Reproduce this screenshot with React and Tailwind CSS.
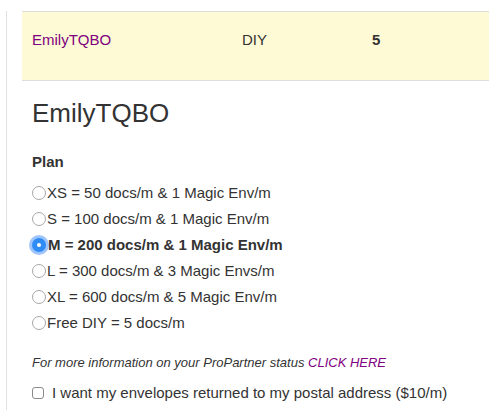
import React from "react";

function Radio({ checked }) {
  if (checked) {
    return (
      <span className="relative inline-flex w-[14px] h-[14px] mr-[2px] shrink-0 items-center justify-center rounded-full bg-[#2f8cf5] shadow-[0_0_0_3px_rgba(80,150,250,0.55)]">
        <span className="w-[4px] h-[4px] rounded-full bg-white" />
      </span>
    );
  }
  return (
    <span className="inline-block w-[14px] h-[14px] mr-[1px] shrink-0 rounded-full border border-[#a8a8a8] bg-white" />
  );
}

const plans = [
  { label: "XS = 50 docs/m & 1 Magic Env/m" },
  { label: "S = 100 docs/m & 1 Magic Env/m" },
  { label: "M = 200 docs/m & 1 Magic Env/m", checked: true },
  { label: "L = 300 docs/m & 3 Magic Envs/m" },
  { label: "XL = 600 docs/m & 5 Magic Env/m" },
  { label: "Free DIY = 5 docs/m" },
];

export default function App() {
  return (
    <div
      className="w-[489px] h-[410px] bg-white overflow-hidden text-[#333] text-[15px]"
      style={{ fontFamily: '"Liberation Sans", Arial, sans-serif' }}
    >
      <div className="ml-[6px] h-full border-l border-[#e0e0e0] pl-[15px]">
        <div className="mt-[11px] h-[70px] bg-[#fefad5] border-y border-[#dedede] flex pl-[10px] pt-[18px] leading-[20px]">
          <span className="w-[210px] text-[#800080]">EmilyTQBO</span>
          <span className="w-[130px]">DIY</span>
          <span className="font-bold">5</span>
        </div>
        <div className="pl-[10px]">
          <h1 className="mt-[17px] text-[26px] leading-[30px] text-[#333]">EmilyTQBO</h1>
          <div className="mt-[24px] font-bold leading-[20px]">Plan</div>
          <div className="mt-[8px] flex flex-col">
            {plans.map((p) => (
              <div key={p.label} className={"h-[26px] flex items-center " + (p.checked ? "font-bold" : "")}>
                <Radio checked={p.checked} />
                <span>{p.label}</span>
              </div>
            ))}
          </div>
          <div className="mt-[19px] italic text-[13px] leading-[16px]">
            For more information on your ProPartner status{" "}
            <span className="text-[#800080]">CLICK HERE</span>
          </div>
          <div className="mt-[12px] flex items-center leading-[20px]">
            <span className="inline-block w-[12px] h-[12px] mr-[8px] rounded-[3px] border border-[#8a8a8a] bg-white" />
            <span>I want my envelopes returned to my postal address ($10/m)</span>
          </div>
        </div>
      </div>
    </div>
  );
}
